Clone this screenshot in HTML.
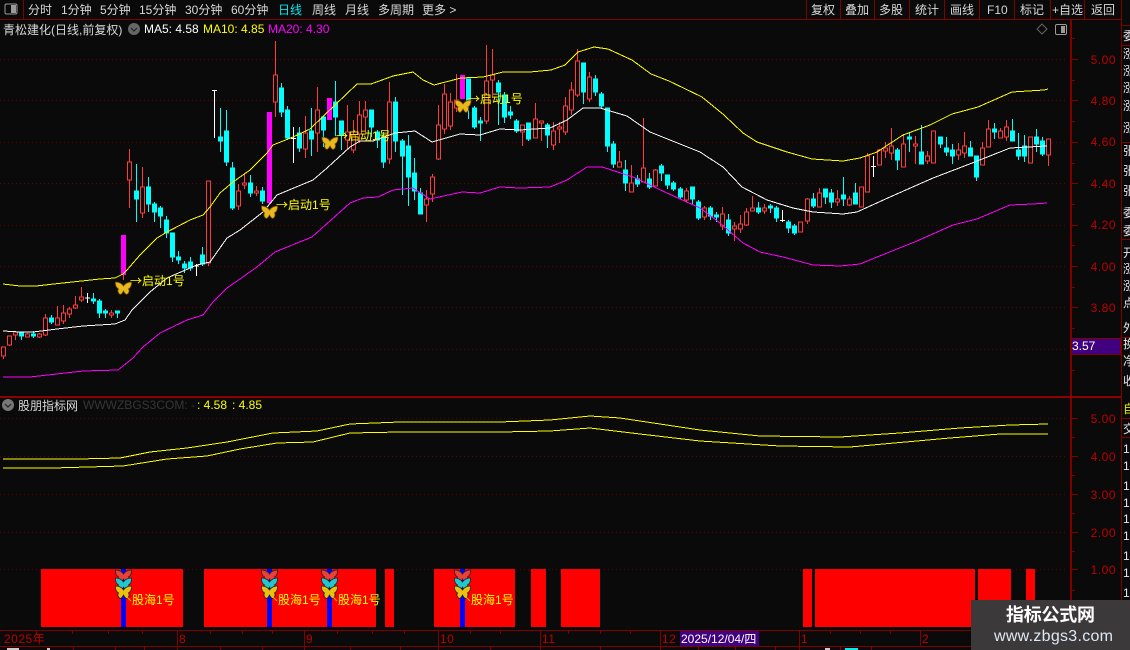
<!DOCTYPE html>
<html><head><meta charset="utf-8"><style>
html,body{margin:0;padding:0;background:#0a0a0a;width:1130px;height:650px;overflow:hidden}
svg{display:block}
text{font-family:"Liberation Sans","WenQuanYi Zen Hei","Noto Sans CJK SC",sans-serif;font-size:12px}
tspan.r{font-family:"Noto Sans CJK SC",sans-serif}
.m{fill:#d8d8d8}.y{fill:#ff0}.a{fill:#c00000;letter-spacing:.5px}.s{fill:#e8e8e8}
</style></head><body>
<svg width="1130" height="650" viewBox="0 0 1130 650" xmlns="http://www.w3.org/2000/svg">
<defs>
<path id="b" d="M0-2C-2-5-5-6-8-6C-8.5-3-7 0-5 1C-6.5 3-5 6-3 6.5C-1.5 6-.5 4 0 3C.5 4 1.5 6 3 6.5C5 6 6.5 3 5 1C7 0 8.5-3 8-6C5-6 2-5 0-2Z"/>
</defs>
<rect width="1130" height="650" fill="#0a0a0a"/>
<!-- grid -->
<g stroke="#600000" stroke-dasharray="1 3" shape-rendering="crispEdges">
<path d="M0 59.5H1068M0 100.5H1068M0 142.5H1068M0 183.5H1068M0 225.5H1068M0 266.5H1068M0 307.5H1068M0 349.5H1068M0 418.5H1068M0 456.5H1068M0 494.5H1068M0 532.5H1068M0 569.5H1068"/>
</g>
<!-- frame -->
<g stroke="#800000" fill="none" shape-rendering="crispEdges">
<path d="M0 19.5H1121M23.5 0V19M806.5 0V19M840.5 0V19M874.5 0V19M909.5 0V19M944.5 0V19M979.5 0V19M1014.5 0V19M1050.5 0V19M1084.5 0V19"/>
<path d="M1121.5 0V650M1121 25.5H1130M1121 45.5H1130M1121 142.5H1130M1121 239.5H1130M1121 337.5H1130M1121 418.5H1130M1121 437.5H1130"/>
<path d="M1071 59.5h7M1071 100.5h7M1071 142.5h7M1071 183.5h7M1071 225.5h7M1071 266.5h7M1071 307.5h7M1071 349.5h7M1071 418.5h7M1071 456.5h7M1071 494.5h7M1071 532.5h7M1071 569.5h7M1071 38.5h4M1071 80.5h4M1071 121.5h4M1071 163.5h4M1071 204.5h4M1071 245.5h4M1071 287.5h4M1071 328.5h4M1071 370.5h4M1071 437.5h4M1071 475.5h4M1071 513.5h4M1071 551.5h4M1071 590.5h4"/>
<path d="M0 630.5H1121M0 646.5H1121M177.5 630V646M304.5 630V646M438.5 630V646M540.5 630V646M660.5 630V646M799.5 630V646M920.5 630V646M36.5 631v3M72.5 631v3M108.5 631v3M142.5 631v3M210.5 631v3M242.5 631v3M272.5 631v3M337.5 631v3M372.5 631v3M404.5 631v3M470.5 631v3M500.5 631v3M568.5 631v3M600.5 631v3M630.5 631v3M830.5 631v3M860.5 631v3M890.5 631v3M73.5 646v4M115.5 646v4M144.5 646v4M177.5 646v4M220.5 646v4M262.5 646v4M304.5 646v4M350.5 646v4M400.5 646v4M438.5 646v4M490.5 646v4M540.5 646v4M600.5 646v4M660.5 646v4M698.5 646v4M735.5 646v4M775.5 646v4M799.5 646v4M840.5 646v4M871.5 646v4"/>
</g>
<rect x="1070" y="20" width="2" height="610" fill="#800000"/>
<rect x="0" y="396" width="1121" height="2" fill="#900000"/>
<!-- candles -->
<g shape-rendering="crispEdges" stroke-width="1">
<path fill="none" stroke="#ff3c3c" d="M3.5 347V359M9.5 336V346M15.5 331V340M27.5 333V337M39.5 333V338M45.5 314V336M57.5 306V325M63.5 305V324M69.5 307V318M75.5 296V309M81.5 287V302M111.5 310V318M123.5 275V280M129.5 149V208M142.5 167V218M208.5 181V266M238.5 184V210M244.5 173V189M256.5 186V196M275.5 41V117M305.5 116V158M317.5 87V152M347.5 105V150M353.5 120V153M359.5 101V143M365.5 101V134M389.5 82V164M426.5 190V222M432.5 174V202M438.5 105V160M444.5 84V134M450.5 93V130M456.5 74V112M486.5 45V124M492.5 49V98M522.5 125V146M535.5 103V138M541.5 121V141M553.5 122V150M559.5 122V143M565.5 97V135M571.5 82V115M577.5 49V97M589.5 72V102M619.5 151V167M631.5 165V192M643.5 118V182M655.5 169V186M686.5 188V202M704.5 206V220M722.5 207V230M734.5 222V241M740.5 215V233M746.5 208V226M752.5 196V211M764.5 204V214M800.5 222V232M807.5 198V224M819.5 188V207M837.5 190V206M849.5 196V206M861.5 187V207M867.5 153V192M879.5 149V165M885.5 142V158M891.5 128V160M903.5 134V167M915.5 136V164M927.5 151V164M933.5 131V163M958.5 143V160M964.5 132V158M982.5 142V165M988.5 120V147M1000.5 128V138M1006.5 120V141M1030.5 137V163M1048.5 139V166"/>
<path fill="#0a0a0a" stroke="#ff3c3c" d="M1.5 347h4V356h-4zM7.5 336h4V345h-4zM13.5 332h4V335h-4zM25.5 334h4V337h-4zM37.5 334h4V337h-4zM43.5 318h4V335h-4zM55.5 318h4V325h-4zM61.5 313h4V321h-4zM67.5 309h4V314h-4zM73.5 305h4V308h-4zM79.5 297h4V300h-4zM109.5 313h4V315h-4zM127.5 162h4V180h-4zM140.5 187h4V213h-4zM206.5 181h4V263h-4zM236.5 191h4V206h-4zM242.5 183h4V185h-4zM254.5 191h4V193h-4zM273.5 75h4V102h-4zM303.5 133h4V149h-4zM315.5 110h4V133h-4zM345.5 132h4V140h-4zM351.5 135h4V150h-4zM357.5 115h4V134h-4zM363.5 110h4V117h-4zM387.5 102h4V159h-4zM424.5 199h4V205h-4zM430.5 177h4V194h-4zM436.5 125h4V159h-4zM442.5 94h4V129h-4zM448.5 102h4V126h-4zM454.5 100h4V108h-4zM484.5 81h4V121h-4zM490.5 75h4V80h-4zM520.5 125h4V132h-4zM533.5 119h4V138h-4zM539.5 121h4V123h-4zM551.5 131h4V145h-4zM557.5 127h4V129h-4zM563.5 106h4V132h-4zM569.5 90h4V110h-4zM575.5 61h4V95h-4zM587.5 77h4V99h-4zM617.5 162h4V167h-4zM629.5 183h4V192h-4zM641.5 168h4V182h-4zM653.5 170h4V186h-4zM684.5 191h4V200h-4zM702.5 208h4V217h-4zM720.5 214h4V226h-4zM732.5 226h4V229h-4zM738.5 224h4V229h-4zM744.5 212h4V225h-4zM750.5 208h4V211h-4zM762.5 208h4V211h-4zM798.5 222h4V232h-4zM805.5 199h4V221h-4zM817.5 193h4V207h-4zM835.5 199h4V202h-4zM847.5 199h4V205h-4zM859.5 187h4V207h-4zM865.5 156h4V192h-4zM877.5 150h4V165h-4zM883.5 148h4V151h-4zM889.5 146h4V153h-4zM901.5 144h4V167h-4zM913.5 144h4V146h-4zM925.5 156h4V161h-4zM931.5 131h4V163h-4zM956.5 150h4V155h-4zM962.5 146h4V153h-4zM980.5 148h4V165h-4zM986.5 129h4V147h-4zM998.5 131h4V138h-4zM1004.5 127h4V137h-4zM1028.5 137h4V163h-4zM1046.5 139h4V155h-4z"/>
<path fill="#00ffff" stroke="#00ffff" d="M21.5 332V340M19.5 332h4V336h-4zM33.5 331V338M31.5 334h4V336h-4zM51.5 315V324M49.5 318h4V322h-4zM93.5 293V304M91.5 299h4V301h-4zM99.5 299V318M97.5 301h4V313h-4zM105.5 309V318M103.5 311h4V313h-4zM117.5 311V318M115.5 311h4V313h-4zM136.5 164V222M134.5 191h4V199h-4zM148.5 177V212M146.5 187h4V204h-4zM154.5 202V222M152.5 204h4V212h-4zM160.5 206V228M158.5 208h4V216h-4zM166.5 216V238M164.5 220h4V233h-4zM172.5 233V262M170.5 233h4V257h-4zM178.5 251V264M176.5 257h4V260h-4zM184.5 261V273M182.5 264h4V268h-4zM190.5 257V271M188.5 262h4V268h-4zM202.5 247V266M200.5 255h4V264h-4zM220.5 108V152M218.5 137h4V141h-4zM226.5 110V166M224.5 131h4V162h-4zM232.5 162V210M230.5 168h4V208h-4zM250.5 175V197M248.5 183h4V193h-4zM262.5 187V204M260.5 191h4V201h-4zM281.5 83V117M279.5 88h4V112h-4zM287.5 106V140M285.5 110h4V138h-4zM299.5 127V152M297.5 133h4V148h-4zM311.5 108V156M309.5 131h4V139h-4zM323.5 117V147M321.5 117h4V130h-4zM335.5 81V136M333.5 102h4V117h-4zM341.5 121V150M339.5 121h4V135h-4zM371.5 110V137M369.5 110h4V127h-4zM377.5 130V148M375.5 132h4V140h-4zM383.5 132V168M381.5 137h4V162h-4zM395.5 97V152M393.5 102h4V141h-4zM402.5 139V195M400.5 141h4V156h-4zM408.5 135V206M406.5 146h4V177h-4zM414.5 158V200M412.5 173h4V191h-4zM420.5 188V214M418.5 193h4V214h-4zM468.5 79V119M466.5 79h4V100h-4zM474.5 106V129M472.5 108h4V127h-4zM480.5 117V141M478.5 121h4V123h-4zM498.5 80V125M496.5 83h4V92h-4zM504.5 92V123M502.5 95h4V117h-4zM510.5 106V119M508.5 112h4V115h-4zM516.5 119V133M514.5 121h4V131h-4zM528.5 123V141M526.5 123h4V139h-4zM547.5 123V148M545.5 125h4V135h-4zM583.5 63V104M581.5 63h4V92h-4zM595.5 75V96M593.5 79h4V92h-4zM601.5 92V108M599.5 94h4V106h-4zM607.5 108V152M605.5 108h4V146h-4zM613.5 141V168M611.5 144h4V164h-4zM625.5 160V191M623.5 170h4V183h-4zM637.5 175V187M635.5 179h4V184h-4zM649.5 173V189M647.5 179h4V187h-4zM661.5 164V181M659.5 166h4V173h-4zM667.5 175V189M665.5 175h4V185h-4zM673.5 181V191M671.5 183h4V189h-4zM680.5 187V199M678.5 189h4V197h-4zM692.5 187V205M690.5 187h4V199h-4zM698.5 200V220M696.5 202h4V218h-4zM710.5 206V220M708.5 208h4V216h-4zM716.5 212V222M714.5 215h4V217h-4zM728.5 214V236M726.5 220h4V233h-4zM758.5 202V214M756.5 208h4V212h-4zM770.5 204V213M768.5 206h4V208h-4zM776.5 206V222M774.5 208h4V218h-4zM788.5 220V233M786.5 222h4V228h-4zM794.5 224V235M792.5 226h4V233h-4zM813.5 193V208M811.5 199h4V206h-4zM825.5 189V204M823.5 189h4V197h-4zM831.5 189V208M829.5 193h4V202h-4zM843.5 177V206M841.5 195h4V199h-4zM855.5 183V204M853.5 193h4V204h-4zM897.5 148V170M895.5 150h4V160h-4zM909.5 133V152M907.5 137h4V139h-4zM921.5 125V164M919.5 152h4V164h-4zM940.5 137V148M938.5 137h4V144h-4zM946.5 137V156M944.5 148h4V152h-4zM952.5 144V164M950.5 150h4V156h-4zM970.5 141V156M968.5 148h4V156h-4zM976.5 156V181M974.5 156h4V177h-4zM994.5 123V139M992.5 129h4V132h-4zM1012.5 119V141M1010.5 131h4V141h-4zM1018.5 133V160M1016.5 150h4V156h-4zM1024.5 135V162M1022.5 146h4V156h-4zM1036.5 129V152M1034.5 137h4V144h-4zM1042.5 137V156M1040.5 141h4V154h-4z"/>
<path fill="none" stroke="#fff" d="M87.5 293V303M85 298h5M196.5 264V276M194 266h5M214.5 90V138M212 90.5h5M293.5 127V163M291 138.5h5M782.5 210V222M780 220.5h5M873.5 156V177M871 166.5h5"/>
<rect x="121" y="235" width="5" height="40" fill="#ff00ff"/>
<rect x="267" y="112" width="5" height="91" fill="#ff00ff"/>
<rect x="327" y="98" width="5" height="22" fill="#ff00ff"/>
<rect x="460" y="75" width="5" height="24" fill="#ff00ff"/>
</g>
<!-- lines -->
<g fill="none" shape-rendering="crispEdges">
<polyline stroke="#ffff00" points="3,284 20,286 36,286 63,283 100,279 115,278 123,274 127,270 140,255 157,238 167,232 190,220 203,215 210,207 220,193 233,182 250,170 267,153 273,145 293,137 310,129 335,105 357,84 371,84 393,76 413,72 423,80 434,85 461,78 483,77 503,72 530,72 551,70 565,65 578,52 594,47 608,49 632,60 651,74 669,81 702,97 724,115 743,133 757,142 787,152 812,159 843,161 860,158 877,152 903,135 930,125 952,114 978,107 1012,92 1044,90 1048,89"/>
<polyline stroke="#ffffff" points="3,331 20,332 33,332 57,329 83,326 115,324 125,320 132,310 150,292 167,278 197,265 210,262 227,238 240,230 263,212 277,195 313,180 327,168 350,147 360,141 373,141 395,133 415,131 432,142 460,134 480,135 500,129 520,130 550,128 567,120 583,108 600,108 627,116 650,132 700,152 723,167 742,187 767,200 793,208 813,212 843,214 857,212 890,197 933,178 967,165 1000,152 1010,148 1047,146"/>
<polyline stroke="#ff00ff" points="3,377 30,377 83,371 118,370 133,358 143,347 160,333 187,320 203,315 213,302 227,288 257,267 275,252 312,237 350,203 363,198 378,197 393,190 413,188 430,199 462,192 480,193 500,187 520,188 550,187 567,180 587,167 602,167 633,177 667,193 700,208 720,223 743,243 760,252 783,257 813,265 840,266 860,264 887,253 917,241 953,225 977,219 1010,205 1033,204 1047,203"/>
<polyline stroke="#ffff00" points="3,459 78,459 120,458 150,452 187,448 227,442 273,433 317,431 350,424 400,422 500,422 550,420 590,416 620,418 660,424 700,430 760,436 840,437 900,433 960,428 1010,425 1048,424"/>
<polyline stroke="#ffff00" points="3,468 53,468 123,466 167,459 207,456 240,449 277,443 313,442 350,433 400,432 500,432 550,431 590,428 640,434 700,441 780,446 850,447 950,438 1000,434 1048,434"/>
</g>
<!-- butterflies top -->
<g stroke="#6b4300" stroke-width=".8" fill="#e8b81c">
<use href="#b" x="123.5" y="288"/><use href="#b" x="269.5" y="212"/><use href="#b" x="330" y="143"/><use href="#b" x="463" y="106"/>
</g>
<text class="y" x="130" y="285"><tspan class="r">→</tspan>启动1号</text>
<text class="y" x="276" y="209"><tspan class="r">→</tspan>启动1号</text>
<text class="y" x="336" y="140"><tspan class="r">→</tspan>启动1号</text>
<text class="y" x="468" y="103"><tspan class="r">→</tspan>启动1号</text>
<!-- red bars -->
<g fill="#ff0000" shape-rendering="crispEdges">
<rect x="41" y="569" width="142" height="58"/><rect x="204" y="569" width="172" height="58"/><rect x="385" y="569" width="9" height="58"/><rect x="434" y="569" width="81" height="58"/><rect x="531" y="569" width="15" height="58"/><rect x="561" y="569" width="39" height="58"/><rect x="803" y="569" width="9" height="58"/><rect x="815" y="569" width="160" height="58"/><rect x="978" y="569" width="33" height="58"/><rect x="1026" y="569" width="9" height="58"/>
</g>
<g fill="#0000ff" shape-rendering="crispEdges">
<rect x="121" y="569" width="5" height="58"/><rect x="267" y="569" width="5" height="58"/><rect x="327" y="569" width="5" height="58"/><rect x="460" y="569" width="5" height="58"/>
</g>
<g stroke="#222" stroke-width=".8">
<g fill="#e8403a"><use href="#b" x="123.5" y="576"/><use href="#b" x="269.5" y="576"/><use href="#b" x="329.5" y="576"/><use href="#b" x="462.5" y="576"/></g>
<g fill="#22c8d0"><use href="#b" x="123.5" y="584"/><use href="#b" x="269.5" y="584"/><use href="#b" x="329.5" y="584"/><use href="#b" x="462.5" y="584"/></g>
<g fill="#ecc010"><use href="#b" x="123.5" y="592"/><use href="#b" x="269.5" y="592"/><use href="#b" x="329.5" y="592"/><use href="#b" x="462.5" y="592"/></g>
</g>
<path stroke="#ffb000" d="M127 597l4 4M273 597l4 4M333 597l4 4M466 597l4 4"/>
<text class="y" x="132" y="604">股海1号</text>
<text class="y" x="278" y="604">股海1号</text>
<text class="y" x="338" y="604">股海1号</text>
<text class="y" x="471" y="604">股海1号</text>
<!-- toolbar -->
<rect x="5" y="4" width="12" height="10" rx="1.5" fill="none" stroke="#9a9a9a"/><rect x="11" y="5" width="5" height="8" fill="#9a9a9a"/>
<text class="m" x="28" y="14">分时</text><text class="m" x="61" y="14">1分钟</text><text class="m" x="100" y="14">5分钟</text><text class="m" x="139" y="14">15分钟</text><text class="m" x="185" y="14">30分钟</text><text class="m" x="231" y="14">60分钟</text>
<text x="278" y="14" style="fill:#00e8f0">日线</text><text class="m" x="312" y="14">周线</text><text class="m" x="345" y="14">月线</text><text class="m" x="378" y="14">多周期</text><text class="m" x="422" y="14">更多 &gt;</text>
<text class="m" x="811" y="14">复权</text><text class="m" x="845" y="14">叠加</text><text class="m" x="879" y="14">多股</text><text class="m" x="915" y="14">统计</text><text class="m" x="950" y="14">画线</text><text class="m" x="987" y="14">F10</text><text class="m" x="1020" y="14">标记</text><text class="m" x="1052" y="14">+自选</text><text class="m" x="1091" y="14">返回</text>
<!-- legend -->
<text class="m" x="3" y="34">青松建化(日线,前复权)</text>
<circle cx="134" cy="29" r="6" fill="#666"/><path d="M131 28l3 3 3-3" fill="none" stroke="#222" stroke-width="1.2"/>
<text x="144" y="33" style="fill:#fff">MA5: 4.58</text>
<text x="203" y="33" style="fill:#ff0">MA10: 4.85</text>
<text x="268" y="33" style="fill:#f0f">MA20: 4.30</text>
<path d="M1042 24l5 5-5 5-5-5z" fill="none" stroke="#666"/>
<rect x="1055.5" y="24.5" width="11" height="10" rx="1.5" fill="none" stroke="#999"/><rect x="1061" y="26" width="4" height="7" fill="#999"/>
<circle cx="8" cy="405" r="6" fill="#777"/><path d="M5 404l3 3 3-3" fill="none" stroke="#222" stroke-width="1.2"/>
<text class="m" x="18" y="410">股朋指标网</text>
<text x="83" y="409" style="fill:#363636">WWWZBGS3COM: -</text>
<text class="y" x="197" y="409">: 4.58</text><text class="y" x="232" y="409">: 4.85</text>
<!-- axis labels -->
<g text-anchor="end">
<text class="a" x="1116" y="64">5.00</text><text class="a" x="1116" y="105">4.80</text><text class="a" x="1116" y="146">4.60</text><text class="a" x="1116" y="188">4.40</text><text class="a" x="1116" y="229">4.20</text><text class="a" x="1116" y="271">4.00</text><text class="a" x="1116" y="312">3.80</text>
<text class="a" x="1116" y="423">5.00</text><text class="a" x="1116" y="461">4.00</text><text class="a" x="1116" y="499">3.00</text><text class="a" x="1116" y="537">2.00</text><text class="a" x="1116" y="574">1.00</text>
</g>
<rect x="1071.5" y="338.5" width="49" height="16" fill="#400080" stroke="#800000"/>
<text x="1072" y="350" style="fill:#fff">3.57</text>
<!-- right strip -->
<text class="s" x="1123" y="40">委</text>
<text class="s" x="1123" y="58">涨</text><text class="s" x="1123" y="75">涨</text><text class="s" x="1123" y="92">涨</text><text class="s" x="1123" y="110">涨</text><text class="s" x="1123" y="132">涨</text>
<text class="s" x="1123" y="155">张</text><text class="s" x="1123" y="175">张</text><text class="s" x="1123" y="195">张</text>
<text class="s" x="1123" y="217">委</text><text class="s" x="1123" y="235">委</text>
<text class="s" x="1123" y="257">开</text><text class="s" x="1123" y="273">涨</text><text class="s" x="1123" y="290">涨</text><text class="s" x="1123" y="307">点</text><text class="s" x="1123" y="332">外</text>
<text class="s" x="1123" y="348">换</text><text class="s" x="1123" y="365">净</text><text class="s" x="1123" y="385">收</text>
<text x="1123" y="413" style="fill:#e8e800">自</text><text class="s" x="1123" y="433">交</text>
<text class="s" x="1123" y="453">1</text><text class="s" x="1123" y="470">1</text><text class="s" x="1123" y="490">1</text><text class="s" x="1123" y="507">1</text><text class="s" x="1123" y="523">1</text><text class="s" x="1123" y="540">1</text><text class="s" x="1123" y="560">1</text><text class="s" x="1123" y="577">1</text><text class="s" x="1123" y="597">1</text>
<!-- time axis -->
<text class="a" x="4" y="643">2025年</text><text class="a" x="179" y="643">8</text><text class="a" x="306" y="643">9</text><text class="a" x="440" y="643">10</text><text class="a" x="542" y="643">11</text><text class="a" x="662" y="643">12</text><text class="a" x="801" y="643">1</text><text class="a" x="922" y="643">2</text>
<rect x="680" y="631" width="79" height="15" fill="#400080"/>
<text x="681" y="643" style="fill:#fff">2025/12/04/四</text>
<rect x="7" y="648" width="12" height="2" fill="#ccc"/><rect x="47" y="648" width="3" height="2" fill="#ccc"/><rect x="825" y="648" width="5" height="2" fill="#ccc"/><rect x="845" y="648" width="13" height="2" fill="#0ee"/>
<!-- watermark -->
<rect x="971" y="600" width="159" height="50" fill="#3b3939"/>
<text x="1006" y="621" style="font-size:18px;font-weight:bold;fill:#fff" textLength="89">指标公式网</text>
<text x="994" y="641" style="font-size:16px;fill:#dfe8f5" textLength="119">www.zbgs3.com</text>
</svg>
</body></html>
